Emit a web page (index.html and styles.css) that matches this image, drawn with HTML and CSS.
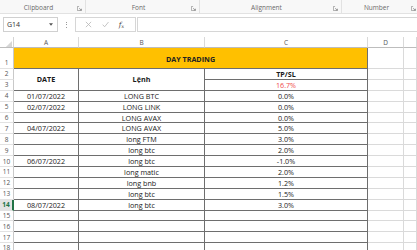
FILE: index.html
```html
<!DOCTYPE html>
<html>
<head>
<meta charset="utf-8">
<link rel="stylesheet" href="styles.css">
</head>
<body>
<div class="ribbon">
  <div class="group g1"><span class="glabel">Clipboard</span><svg class="launch" viewBox="0 0 6 6"><path d="M0.5 0.5H2.5M0.5 0.5V5.5H5.5V3.5" fill="none" stroke="#8a8a8a" stroke-width="0.8"/><path d="M2.5 2.5L5 5M5 3.2V5H3.2" fill="none" stroke="#8a8a8a" stroke-width="0.8"/></svg></div>
  <div class="group g2"><span class="glabel">Font</span><svg class="launch" viewBox="0 0 6 6"><path d="M0.5 0.5H2.5M0.5 0.5V5.5H5.5V3.5" fill="none" stroke="#8a8a8a" stroke-width="0.8"/><path d="M2.5 2.5L5 5M5 3.2V5H3.2" fill="none" stroke="#8a8a8a" stroke-width="0.8"/></svg></div>
  <div class="group g3"><span class="glabel">Alignment</span><svg class="launch" viewBox="0 0 6 6"><path d="M0.5 0.5H2.5M0.5 0.5V5.5H5.5V3.5" fill="none" stroke="#8a8a8a" stroke-width="0.8"/><path d="M2.5 2.5L5 5M5 3.2V5H3.2" fill="none" stroke="#8a8a8a" stroke-width="0.8"/></svg></div>
  <div class="group g4"><span class="glabel">Number</span><svg class="launch" viewBox="0 0 6 6"><path d="M0.5 0.5H2.5M0.5 0.5V5.5H5.5V3.5" fill="none" stroke="#8a8a8a" stroke-width="0.8"/><path d="M2.5 2.5L5 5M5 3.2V5H3.2" fill="none" stroke="#8a8a8a" stroke-width="0.8"/></svg></div>
</div>
<div class="fbar">
  <div class="namebox"><span>G14</span><svg class="dd" viewBox="0 0 5 3"><path d="M0 0H5L2.5 3Z" fill="#555"/></svg></div>
  <div class="dots"><i></i><i></i><i></i></div>
  <div class="fbtns">
    <svg class="fb" viewBox="0 0 8 8"><path d="M1 1L7 7M7 1L1 7" stroke="#b5b5b5" stroke-width="0.9"/></svg>
    <svg class="fb" viewBox="0 0 8 8"><path d="M0.8 4.2L3 6.6L7.4 1.2" fill="none" stroke="#b5b5b5" stroke-width="0.9"/></svg>
    <span class="fx">f<sub>x</sub></span>
  </div>
  <div class="finput"></div>
</div>
<div class="sheet">
  <div class="corner"><svg viewBox="0 0 8 8"><path d="M8 1V8H1Z" fill="#d6d6d6"/></svg></div>
  <div class="ch">A</div><div class="ch">B</div><div class="ch">C</div><div class="ch">D</div><div class="ch"></div>

  <div class="rh r1">1</div>
  <div class="t title">DAY TRADING</div>
  <div class="g"></div><div class="g"></div>

  <div class="rh">2</div>
  <div class="t b span2">DATE</div>
  <div class="t b span2">Lệnh</div>
  <div class="t b">TP/SL</div>
  <div class="g"></div><div class="g"></div>

  <div class="rh">3</div>
  <div class="t red">16.7%</div>
  <div class="g"></div><div class="g"></div>

  <div class="rh">4</div><div class="t">01/07/2022</div><div class="t">LONG BTC</div><div class="t">0.0%</div><div class="g"></div><div class="g"></div>
  <div class="rh">5</div><div class="t">02/07/2022</div><div class="t">LONG LINK</div><div class="t">0.0%</div><div class="g"></div><div class="g"></div>
  <div class="rh">6</div><div class="t"></div><div class="t">LONG AVAX</div><div class="t">0.0%</div><div class="g"></div><div class="g"></div>
  <div class="rh">7</div><div class="t">04/07/2022</div><div class="t">LONG AVAX</div><div class="t">5.0%</div><div class="g"></div><div class="g"></div>
  <div class="rh">8</div><div class="t"></div><div class="t">long FTM</div><div class="t">3.0%</div><div class="g"></div><div class="g"></div>
  <div class="rh">9</div><div class="t"></div><div class="t">long btc</div><div class="t">2.0%</div><div class="g"></div><div class="g"></div>
  <div class="rh">10</div><div class="t">06/07/2022</div><div class="t">long btc</div><div class="t">-1.0%</div><div class="g"></div><div class="g"></div>
  <div class="rh">11</div><div class="t"></div><div class="t">long matic</div><div class="t">2.0%</div><div class="g"></div><div class="g"></div>
  <div class="rh">12</div><div class="t"></div><div class="t">long bnb</div><div class="t">1.2%</div><div class="g"></div><div class="g"></div>
  <div class="rh">13</div><div class="t"></div><div class="t">long btc</div><div class="t">1.5%</div><div class="g"></div><div class="g"></div>
  <div class="rh sel">14</div><div class="t">08/07/2022</div><div class="t">long btc</div><div class="t">3.0%</div><div class="g"></div><div class="g"></div>
  <div class="rh">15</div><div class="t"></div><div class="t"></div><div class="t"></div><div class="g"></div><div class="g"></div>
  <div class="rh">16</div><div class="t"></div><div class="t"></div><div class="t"></div><div class="g"></div><div class="g"></div>
  <div class="rh">17</div><div class="t"></div><div class="t"></div><div class="t"></div><div class="g"></div><div class="g"></div>
  <div class="rh r18">18</div><div class="t"></div><div class="t"></div><div class="t"></div><div class="g"></div><div class="g"></div>
</div>
</body>
</html>
```
FILE: styles.css
```css
* { box-sizing: border-box; }
html, body { margin: 0; padding: 0; }
body {
  width: 417px;
  height: 250px;
  overflow: hidden;
  background: #fff;
  font-family: "Open Sans", "Liberation Sans", sans-serif;
  color: #111;
}
.ribbon {
  display: flex;
  height: 14px;
  background: #f8f8f8;
  border-bottom: 1px solid #e2e2e2;
}
.group {
  flex: none;
  display: flex;
  align-items: center;
  height: 13px;
  border-right: 1px solid #e2e2e2;
}
.g1 { width: 86px; }
.g2 { width: 114px; }
.g3 { width: 142px; }
.g4 { width: 75px; border-right: none; }
.glabel {
  flex: 1;
  text-align: center;
  font-size: 6.5px;
  color: #6a6a6a;
  padding-top: 2px;
}
.launch { width: 5px; height: 5px; margin-right: 3px; margin-top: 3px; }
.g4 .launch { margin-right: 1px; }

.fbar {
  display: flex;
  align-items: center;
  height: 23px;
  padding: 3px 0 5px 3px;
  background: #fff;
}
.namebox {
  width: 55px;
  height: 15px;
  border: 1px solid #d0d0d0;
  display: flex;
  align-items: center;
  justify-content: space-between;
  padding: 0 4px 0 3px;
  font-size: 7px;
  color: #333;
}
.dd { width: 4px; height: 3px; }
.dots {
  width: 17px;
  display: flex;
  flex-direction: column;
  align-items: center;
  gap: 1.5px;
}
.dots i { width: 1px; height: 1px; background: #999; display: block; }
.fbtns {
  width: 61px;
  height: 15px;
  border: 1px solid #d6d6d6;
  display: flex;
  align-items: center;
  justify-content: space-around;
  padding: 0 6px 0 4px;
}
.fb { width: 7px; height: 7px; }
.fx { font-family: "DejaVu Serif", serif; font-style: italic; font-size: 7px; color: #444; }
.fx sub { font-size: 5px; vertical-align: -1px; }
.finput {
  flex: 1;
  height: 15px;
  margin-left: 1px;
  border: 1px solid #d6d6d6;
  border-right: none;
}

.sheet {
  display: grid;
  width: 417px;
  grid-template-columns: 14px 65px 126px 163px 36px 1fr;
  grid-template-rows: 11px 21px repeat(17, 10.9px);
}
.sheet > div {
  display: flex;
  align-items: center;
  justify-content: center;
  font-size: 7.2px;
  white-space: nowrap;
  overflow: hidden;
}
.corner {
  background: #fff;
  border-right: 1px solid #d4d4d4;
  border-bottom: 1px solid #bdbdbd;
}
.corner svg { width: 7px; height: 7px; margin: 2px 0 0 3px; }
.sheet > .ch {
  background: #fff;
  color: #555;
  border-right: 1px solid #d9d9d9;
  border-bottom: 1px solid #bdbdbd;
  font-size: 6.5px;
}
.sheet > .rh {
  background: #fff;
  color: #555;
  border-right: 1px solid #c9c9c9;
  border-bottom: 1px solid #e2e2e2;
  font-size: 6.5px;
}
.sheet > .rh.r1 { align-items: flex-end; padding-bottom: 1px; }
.sheet > .rh.r18 { align-items: flex-start; }
.sheet > .rh.sel {
  background: #e3e3e3;
  color: #217346;
  font-weight: 700;
  border-right: 2px solid #217346;
}
.t {
  border-right: 1px solid #6e6e6e;
  border-bottom: 1px solid #6e6e6e;
  color: #1a1a1a;
}
.g {
  border-right: 1px solid #dadada;
  border-bottom: 1px solid #dadada;
}
.title {
  grid-column: span 3;
  background: #ffc000;
  font-weight: 700;
  color: #222;
  padding-top: 1px;
}
.b { font-weight: 700; }
.span2 { grid-row: span 2; }
.red { color: #f04a4a; }
```
